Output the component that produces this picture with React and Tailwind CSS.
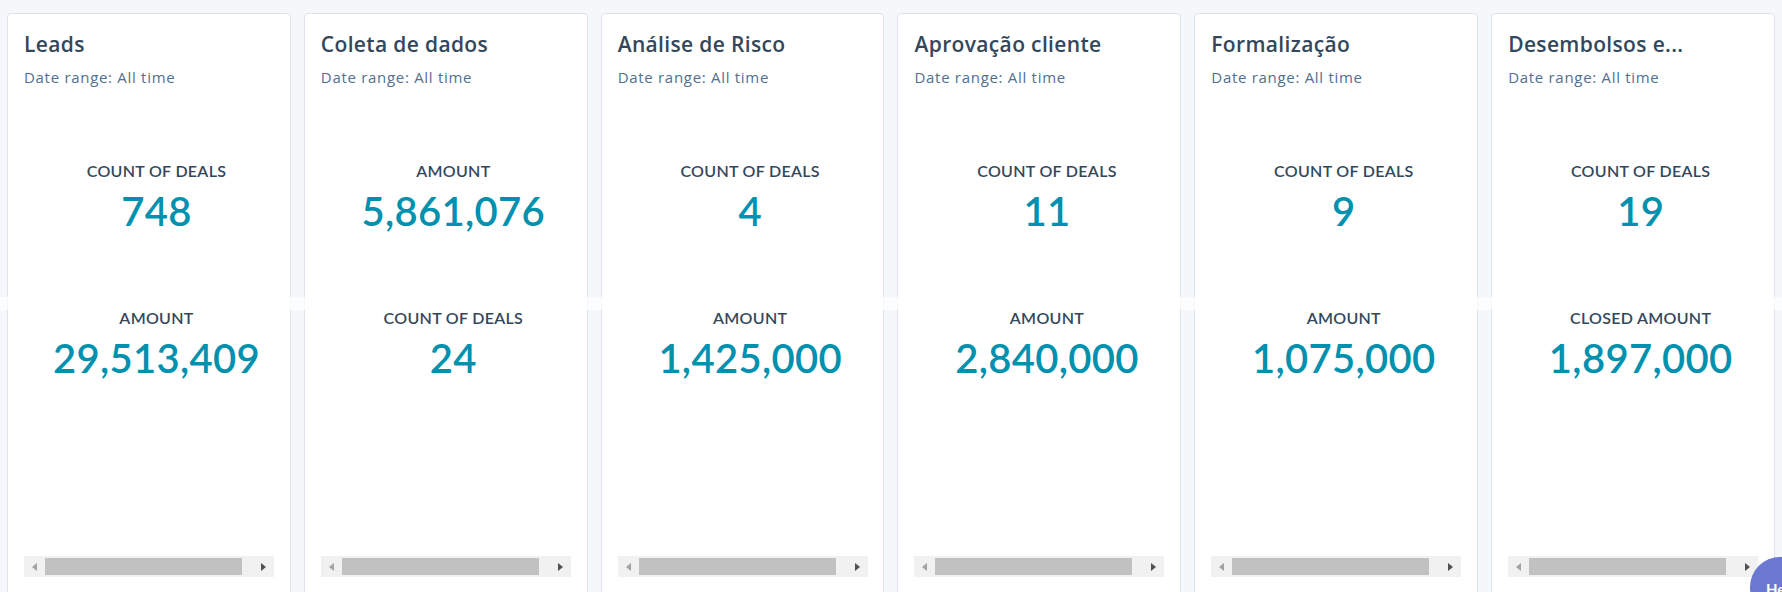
import React from "react";

const cards = [
  { title: "Leads", m: [["COUNT OF DEALS", "748"], ["AMOUNT", "29,513,409"]] },
  { title: "Coleta de dados", m: [["AMOUNT", "5,861,076"], ["COUNT OF DEALS", "24"]] },
  { title: "Análise de Risco", m: [["COUNT OF DEALS", "4"], ["AMOUNT", "1,425,000"]] },
  { title: "Aprovação cliente", m: [["COUNT OF DEALS", "11"], ["AMOUNT", "2,840,000"]] },
  { title: "Formalização", m: [["COUNT OF DEALS", "9"], ["AMOUNT", "1,075,000"]] },
  { title: "Desembolsos e...", m: [["COUNT OF DEALS", "19"], ["CLOSED AMOUNT", "1,897,000"]] },
];

function Metric({ label, value, className }) {
  return (
    <div className={"flex flex-col items-center " + className}>
      <div className="text-[16px] leading-[20px] font-semibold text-[#33475b] tracking-[0.3px]">{label}</div>
      <div className="mt-[6px] text-[40px] leading-[48px] font-semibold text-[#0091ae] tracking-[0.3px]">{value}</div>
    </div>
  );
}

function ScrollBar() {
  return (
    <div className="ml-[16px] w-[250px] h-[21px] bg-[#f1f1f1] flex items-center relative">
      <div className="ml-[8px] w-0 h-0 border-y-[4px] border-y-transparent border-r-[5px] border-r-[#a3a3a3]" />
      <div className="ml-[8px] w-[197px] h-[17px] bg-[#c1c1c1]" />
      <div className="ml-[19px] w-0 h-0 border-y-[4px] border-y-transparent border-l-[5px] border-l-[#505050]" />
    </div>
  );
}

export default function App() {
  return (
    <div className="relative h-[592px] w-[1782px] overflow-hidden bg-[#f5f8fa]" style={{ fontFamily: "Lato, 'Noto Sans', sans-serif" }}>
      <div className="flex gap-[13px] px-[7px] pt-[13px]">
        {cards.map((c) => (
          <div key={c.title} className="flex-1 h-[620px] bg-white border border-[#dfe3eb] rounded-[4px] pt-[16px]">
            <div className="pl-[16px] text-[21px] leading-[28px] font-semibold text-[#33475b] whitespace-nowrap tracking-[0.35px] font-['Open_Sans',sans-serif]">{c.title}</div>
            <div className="pl-[16px] mt-[9px] text-[15px] leading-[20px] text-[#516f90] tracking-[0.7px] font-['Open_Sans',sans-serif]">Date range: All time</div>
            <div className="ml-[16px] w-[265px]">
              <Metric label={c.m[0][0]} value={c.m[0][1]} className="mt-[74px]" />
              <Metric label={c.m[1][0]} value={c.m[1][1]} className="mt-[73px]" />
            </div>
            <div className="mt-[174px]">
              <ScrollBar />
            </div>
          </div>
        ))}
      </div>
      <div className="absolute left-0 top-[297px] w-full h-[13px] bg-white/70" />
      <div className="absolute left-[1750px] top-[557px] w-[120px] h-[60px] rounded-full bg-[#6b78d2] pl-[16px] pt-[22px] text-white text-[15px] font-bold leading-[20px]">
        Help
      </div>
    </div>
  );
}
